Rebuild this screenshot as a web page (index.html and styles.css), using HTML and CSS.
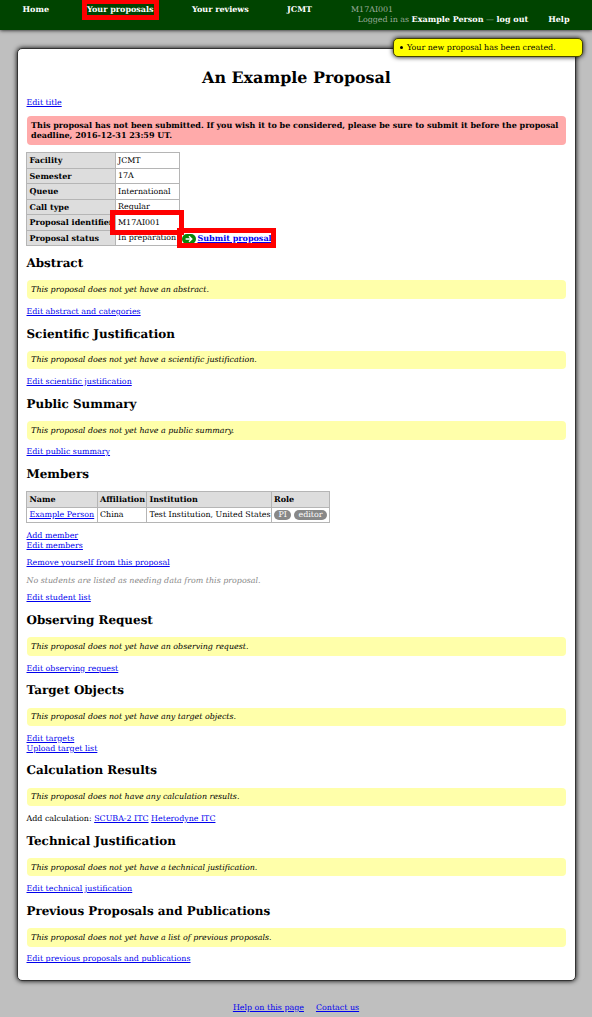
FILE: index.html
```html
<!DOCTYPE html>
<html lang="en">
<head>
<meta charset="utf-8">
<title>An Example Proposal</title>
<link rel="stylesheet" href="styles.css">
</head>
<body>
<header class="header">
<nav class="nav"><a class="nav-home">Home</a><a class="nav-proposals"><span class="mark mark-nav"></span><span class="nav-label">Your proposals</span></a><a class="nav-reviews">Your reviews</a><a class="nav-jcmt">JCMT</a><span>M17AI001</span></nav>
<div class="account"><span>Logged in as <b>Example Person</b> — <b>log out</b></span><b>Help</b></div>
</header>
<ul class="flash"><li>Your new proposal has been created.</li></ul>
<main class="card">
<h1>An Example Proposal</h1>
<p class="links"><a href="#">Edit title</a></p>
<p class="warning">This proposal has not been submitted. If you wish it to be considered, please be sure to submit it before the proposal deadline, 2016-12-31 23:59 UT.</p>
<div class="summary">
<table class="facts">
<tr><th>Facility</th><td>JCMT</td></tr>
<tr><th>Semester</th><td>17A</td></tr>
<tr><th>Queue</th><td>International</td></tr>
<tr><th>Call type</th><td>Regular</td></tr>
<tr><th>Proposal identifier</th><td>M17AI001</td></tr>
<tr><th>Proposal status</th><td>In preparation</td></tr>
</table>
<div class="submit"><svg class="arrow" viewBox="0 0 14 10"><rect width="14" height="10" rx="5" fill="#0a870a"/><path d="M3.6 5H9.8M7 2.3L9.8 5L7 7.7" fill="none" stroke="#fff" stroke-width="1.4"/></svg><a href="#">Submit proposal</a></div>
<span class="mark mark-id"></span><span class="mark mark-submit"></span>
</div>
<h2>Abstract</h2>
<p class="note">This proposal does not yet have an abstract.</p>
<p class="links"><a href="#">Edit abstract and categories</a></p>
<h2>Scientific Justification</h2>
<p class="note">This proposal does not yet have a scientific justification.</p>
<p class="links"><a href="#">Edit scientific justification</a></p>
<h2>Public Summary</h2>
<p class="note">This proposal does not yet have a public summary.</p>
<p class="links"><a href="#">Edit public summary</a></p>
<h2>Members</h2>
<table class="members">
<tr><th>Name</th><th>Affiliation</th><th>Institution</th><th>Role</th></tr>
<tr><td><a href="#">Example Person</a></td><td>China</td><td>Test Institution, United States</td><td><div class="roles"><span class="tag">PI</span><span class="tag">editor</span></div></td></tr>
</table>
<p class="links"><a href="#">Add member</a><br><a href="#">Edit members</a></p>
<p class="links"><a href="#">Remove yourself from this proposal</a></p>
<p class="links muted">No students are listed as needing data from this proposal.</p>
<p class="links"><a href="#">Edit student list</a></p>
<h2>Observing Request</h2>
<p class="note">This proposal does not yet have an observing request.</p>
<p class="links"><a href="#">Edit observing request</a></p>
<h2>Target Objects</h2>
<p class="note">This proposal does not yet have any target objects.</p>
<p class="links"><a href="#">Edit targets</a><br><a href="#">Upload target list</a></p>
<h2>Calculation Results</h2>
<p class="note">This proposal does not have any calculation results.</p>
<p class="links">Add calculation: <a href="#">SCUBA-2 ITC</a> <a href="#">Heterodyne ITC</a></p>
<h2>Technical Justification</h2>
<p class="note">This proposal does not yet have a technical justification.</p>
<p class="links"><a href="#">Edit technical justification</a></p>
<h2>Previous Proposals and Publications</h2>
<p class="note">This proposal does not yet have a list of previous proposals.</p>
<p class="links"><a href="#">Edit previous proposals and publications</a></p>
</main>
<footer class="footer"><a href="#">Help on this page</a><a href="#">Contact us</a></footer>
</body>
</html>
```
FILE: styles.css
```css
* { box-sizing: border-box; }
body {
  margin: 0;
  height: 1017px;
  overflow: hidden;
  background: #bfbfbf;
  color: #000;
  font: 7.93px/9.8px "DejaVu Serif", serif;
  text-rendering: geometricPrecision;
}
a[href] { color: #0000ee; text-decoration: underline; }
.header {
  height: 29.5px;
  padding: 5px 22.5px 0;
  background: #004400;
  color: #9cac9c;
  box-shadow: 0 0 4px #000;
}
.nav, .account { display: flex; white-space: nowrap; }
.nav a, .account b { color: #fff; font-size: 8.02px; font-weight: bold; }
.nav-home { width: 64.5px; }
.nav-proposals { width: 105px; position: relative; }
.nav-label { position: relative; }
.nav-reviews { width: 95px; }
.nav-jcmt { width: 64px; }
.account { justify-content: flex-end; gap: 20px; }
.mark { position: absolute; border: 5px solid #f00; }
.mark-nav { left: -5px; top: -6px; width: 77px; height: 20.5px; }
.flash {
  position: absolute;
  right: 9px;
  top: 37.5px;
  width: 190px;
  height: 19.5px;
  margin: 0;
  padding: 4px 0 0 13px;
  border: 1px solid #444400;
  border-radius: 5px;
  background: #ff0;
  box-shadow: 0 0 5px #000;
  list-style: none;
}
.flash li::before {
  content: "";
  position: absolute;
  left: 6px;
  top: 7.5px;
  width: 3.4px;
  height: 3.4px;
  border-radius: 50%;
  background: #000;
}
.card {
  width: 559px;
  height: 933px;
  margin: 18px 0 0 17px;
  padding: 19.2px 8.5px 0;
  border: 1px solid #333;
  border-radius: 5px;
  background: #fff;
  box-shadow: 0 0 5px #000;
}
h1 { margin: 0 0 10.6px; font-size: 15.9px; line-height: 20px; text-align: center; }
h2 { margin: 10.1px 0 9.1px; font-size: 11.95px; line-height: 15px; }
.links { margin: 7.7px 0; }
.warning {
  margin: 7.7px 0.5px 7.7px 0;
  padding: 5.3px 0 3.9px 4.6px;
  border-radius: 4px;
  background: #ffaaaa;
  font-size: 8.02px;
  font-weight: bold;
}
.note {
  margin: 0 0.5px 0 0;
  padding: 4.8px 4.6px 4px;
  border-radius: 4px;
  background: #ffffaa;
  font-style: italic;
}
.muted { color: #888; font-style: italic; }
table { border-collapse: collapse; table-layout: fixed; font-size: 7.93px; white-space: nowrap; }
th, td { height: 15.55px; padding: 0 2.5px; border: 1px solid #b5b5b5; text-align: left; line-height: 10px; }
th { background: #ddd; font-size: 8.02px; }
td { padding-left: 2px; }
.facts td { padding-top: 1px; }
.summary { position: relative; display: flex; align-items: flex-end; height: 94px; }
.facts { width: 153.5px; margin-left: -0.5px; }
.facts th { width: 89px; }
.submit { display: flex; align-items: center; gap: 2px; height: 15px; margin-left: 2px; font-size: 8.02px; font-weight: bold; }
.arrow { width: 14px; height: 10px; }
.mark-id { left: 83.5px; top: 58px; width: 74px; height: 25px; }
.mark-submit { left: 150.5px; top: 76px; width: 99px; height: 20px; }
.members { width: 303.5px; margin-left: -0.5px; }
.members td { padding-left: 2.5px; }
.members th:nth-child(1) { width: 70.5px; }
.members th:nth-child(2) { width: 49.5px; }
.members th:nth-child(3) { width: 124.5px; }
.roles { display: flex; gap: 2.5px; }
.tag { padding: 0 4.5px; border-radius: 5px; background: #888; color: #fff; line-height: 9.5px; }
.footer { display: flex; justify-content: center; gap: 12px; margin-top: 22.5px; }
```
